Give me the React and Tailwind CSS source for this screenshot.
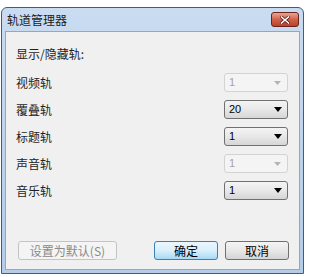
import React from 'react';

const cjk = { fontFamily: '"Noto Sans CJK SC", "Liberation Sans", sans-serif' };

const tracks = [
  { label: '视频轨', value: '1', enabled: false },
  { label: '覆叠轨', value: '20', enabled: true },
  { label: '标题轨', value: '1', enabled: true },
  { label: '声音轨', value: '1', enabled: false },
  { label: '音乐轨', value: '1', enabled: true },
];

function Arrow({ enabled }) {
  return enabled ? (
    <svg width="8" height="5" viewBox="0 0 8 5"><path d="M0 0H8L4 5Z" fill="#000" /></svg>
  ) : (
    <svg width="7" height="4" viewBox="0 0 7 4"><path d="M0 0H7L3.5 4Z" fill="#b4b4b4" /></svg>
  );
}

function Combo({ value, enabled }) {
  return (
    <div
      className={
        enabled
          ? 'flex h-[19px] w-[64px] items-center justify-between rounded-[3px] border border-[#707070] bg-gradient-to-b from-[#f4f4f4] via-[#e8e8e8] to-[#d6d6d6] pl-[4px] pr-[5px] text-[11px] text-black'
          : 'flex h-[19px] w-[64px] items-center justify-between rounded-[3px] border border-[#d3d3d3] bg-[#f4f4f4] pl-[4px] pr-[6px] text-[11px] text-[#a3a3a3]'
      }
      style={{ fontFamily: '"Liberation Sans", sans-serif' }}
    >
      <span>{value}</span>
      <Arrow enabled={enabled} />
    </div>
  );
}

export default function App() {
  return (
    <div className="h-[277px] w-[309px] overflow-hidden bg-white" style={cjk}>
      <div className="ml-[1px] mt-[7px] flex h-[267px] w-[303px] flex-col rounded-t-[6px] border border-[#3d5d82] bg-gradient-to-b from-[#c9dcf1] to-[#b3cce8] px-[3px] pb-[3px]">
        {/* title bar */}
        <div className="flex h-[23px] shrink-0 items-center justify-between pl-[2px] pr-[1px]">
          <span className="text-[12px] text-[#1b1b1b]">轨道管理器</span>
          <div className="flex h-[15px] w-[28px] items-center justify-center rounded-[3px] border border-[#6b2419] bg-gradient-to-b from-[#e9a593] via-[#d2614a] to-[#b8412c]">
            <svg width="10" height="8" viewBox="0 0 10 8">
              <path d="M1.5 1L8.5 7M8.5 1L1.5 7" stroke="#5a1a10" strokeWidth="3" strokeLinecap="square" />
              <path d="M1.5 1L8.5 7M8.5 1L1.5 7" stroke="#fff" strokeWidth="1.6" strokeLinecap="square" />
            </svg>
          </div>
        </div>
        {/* client */}
        <div className="flex flex-1 flex-col border border-[#8ea8c5] bg-[#f0f0f0] pl-[10px] pr-[11px]">
          <div className="mt-[14px] text-[12px] leading-[16px] text-[#1e1e1e]">显示/隐藏轨:</div>
          <div className="mt-[11px] flex flex-col gap-[8px]">
            {tracks.map((t) => (
              <div key={t.label} className="flex h-[19px] items-center justify-between">
                <span className="text-[12px] text-[#1e1e1e]">{t.label}</span>
                <Combo value={t.value} enabled={t.enabled} />
              </div>
            ))}
          </div>
          <div className="mt-[41px] flex items-center">
            <div className="ml-[2px] flex h-[19px] w-[99px] items-center justify-center rounded-[3px] border border-[#c2c5c8] bg-[#f4f4f4] text-[12px] text-[#8a8a8a]">
              设置为默认(S)
            </div>
            <div className="ml-auto flex h-[19px] w-[64px] items-center justify-center rounded-[3px] border border-[#3c7fb1] bg-gradient-to-b from-[#eaf6fd] via-[#d9f0fc] to-[#a7d9f5] text-[12px] text-black">
              确定
            </div>
            <div className="ml-[7px] mr-[-1px] flex h-[19px] w-[64px] items-center justify-center rounded-[3px] border border-[#707070] bg-gradient-to-b from-[#f4f4f4] via-[#e8e8e8] to-[#d4d4d4] text-[12px] text-black">
              取消
            </div>
          </div>
        </div>
      </div>
    </div>
  );
}
